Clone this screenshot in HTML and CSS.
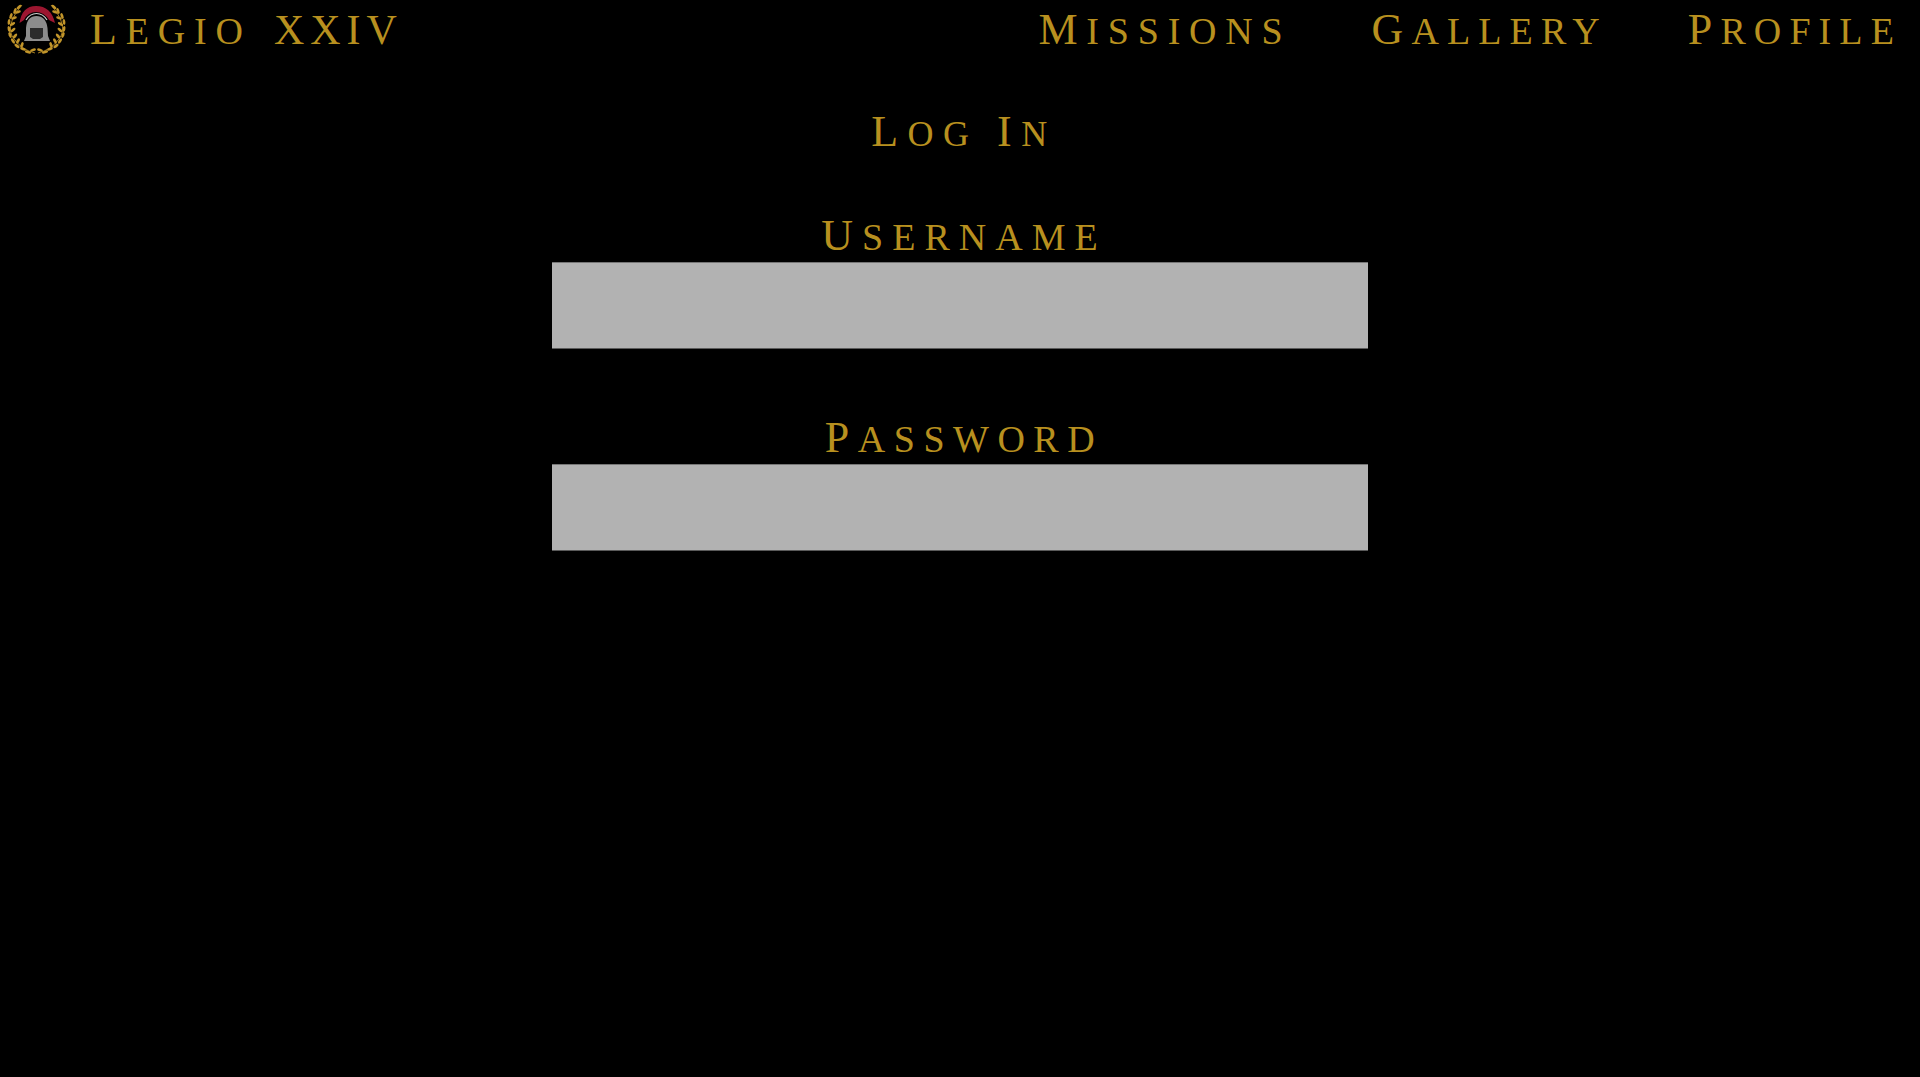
FILE: index.html
```html
<!DOCTYPE html>
<html lang="en">
<head>
  <meta charset="utf-8">
  <title>Legio XXIV - Log In</title>
  <link rel="stylesheet" href="styles.css">
</head>
<body>
  <header class="topbar">
    <a class="brand" href="#">
      <svg class="logo" viewBox="0 0 72 60" width="72" height="60" aria-hidden="true">
        <defs>
          <g id="laurel" fill="#c2952a">
            <path d="M22 5 Q4 26 14 39 Q22 50 35 53" fill="none" stroke="#c2952a" stroke-width=".8"/>
            <ellipse cx="19" cy="7" rx="3" ry="1.4" transform="rotate(-40 19 7)"/>
            <ellipse cx="15" cy="11" rx="3" ry="1.4" transform="rotate(-70 15 11)"/>
            <ellipse cx="18" cy="12" rx="3" ry="1.4" transform="rotate(-20 18 12)"/>
            <ellipse cx="11" cy="16" rx="3" ry="1.4" transform="rotate(-70 11 16)"/>
            <ellipse cx="14" cy="18" rx="3" ry="1.4" transform="rotate(-20 14 18)"/>
            <ellipse cx="9" cy="22" rx="3" ry="1.4" transform="rotate(-85 9 22)"/>
            <ellipse cx="12.5" cy="24" rx="3" ry="1.4" transform="rotate(-30 12.5 24)"/>
            <ellipse cx="9" cy="29" rx="3" ry="1.4" transform="rotate(80 9 29)"/>
            <ellipse cx="13" cy="30" rx="3" ry="1.4" transform="rotate(-40 13 30)"/>
            <ellipse cx="10" cy="35" rx="3" ry="1.4" transform="rotate(70 10 35)"/>
            <ellipse cx="15" cy="36" rx="3" ry="1.4" transform="rotate(-50 15 36)"/>
            <ellipse cx="13" cy="41" rx="3" ry="1.4" transform="rotate(55 13 41)"/>
            <ellipse cx="18" cy="41" rx="3" ry="1.4" transform="rotate(-60 18 41)"/>
            <ellipse cx="17" cy="46" rx="3" ry="1.4" transform="rotate(35 17 46)"/>
            <ellipse cx="22" cy="45" rx="3" ry="1.4" transform="rotate(-70 22 45)"/>
            <ellipse cx="23" cy="49" rx="3" ry="1.4" transform="rotate(20 23 49)"/>
            <ellipse cx="28" cy="52" rx="3.2" ry="1.4" transform="rotate(15 28 52)"/>
            <ellipse cx="33" cy="50" rx="3" ry="1.4" transform="rotate(-15 33 50)"/>
          </g>
        </defs>
        <use href="#laurel"/>
        <use href="#laurel" transform="translate(73 0) scale(-1 1)"/>
        <path d="M19.5 23 Q22 6 36 6 Q51 6 55 23 L49 20 Q44 12 36 12 Q28 12 24 20 Z" fill="#9c1630"/>
        <path d="M26 20 Q30 13.5 36.5 13.5 Q43 13.5 47 20" fill="none" stroke="#cfcfcf" stroke-width="1.2"/>
        <path d="M26 28 Q27 16 36.5 16 Q46 16 47.5 28 L48 36 L50 41 L24 41 L26 36 Z" fill="#8c8c8c"/>
        <path d="M30 28 H43 V37 L40 39 H33 L30 37 Z" fill="#2b2b2b"/>
      </svg>
      <span class="brand-name"><span class="cap">L</span>egio <span class="cap numeral">XXIV</span></span>
    </a>
    <nav class="menu">
      <a class="wide" href="#"><span class="cap">M</span>issions</a>
      <a href="#"><span class="cap">G</span>allery</a>
      <a href="#"><span class="cap">P</span>rofile</a>
    </nav>
  </header>

  <main class="login">
    <h1 class="title"><span class="cap">L</span>og <span class="cap">I</span>n</h1>
    <form class="form">
      <label class="field">
        <span class="field-label"><span class="cap">U</span>sername</span>
        <input class="field-input" type="text">
      </label>
      <label class="field">
        <span class="field-label tight"><span class="cap">P</span>assword</span>
        <input class="field-input" type="password">
      </label>
    </form>
  </main>
</body>
</html>
```

FILE: styles.css
```css
html, body {margin:0; padding:0; height:100%;}
body {background:#000000; color:#b8901f; font-family:"Liberation Serif","Times New Roman",serif; text-transform:uppercase;}
a {color:inherit; text-decoration:none;}
.cap {font-size:44px;}

.topbar {display:flex; justify-content:space-between; height:60px;}
.brand {display:flex; align-items:flex-start;}
.logo {display:block; flex:none;}
.brand-name {font-size:38px; letter-spacing:8.8px; word-spacing:4px; line-height:60px; margin-left:18px;}
.numeral {font-size:42px; letter-spacing:6px;}
.menu {display:flex; gap:80px; padding-right:18px; font-size:38px; letter-spacing:8.1px; line-height:60px;}
.wide {letter-spacing:8.8px;}

.login {display:flex; flex-direction:column; align-items:center;}
.title {margin:47px 0 0; padding-left:8px; font-size:36px; font-weight:normal; letter-spacing:9.5px; line-height:50px;}
.form {display:flex; flex-direction:column; gap:64px; margin-top:52px;}
.field {display:flex; flex-direction:column; align-items:center;}
.field-label {padding-left:8px; font-size:38px; letter-spacing:9px; line-height:50px;}
.tight {letter-spacing:8.5px;}
.field-input {box-sizing:border-box; width:816px; height:87px; margin:0; padding:0; background:#b2b2b2; border:0; border-top:1px solid #767676; border-bottom:1px solid #5a5a5a;}
```
